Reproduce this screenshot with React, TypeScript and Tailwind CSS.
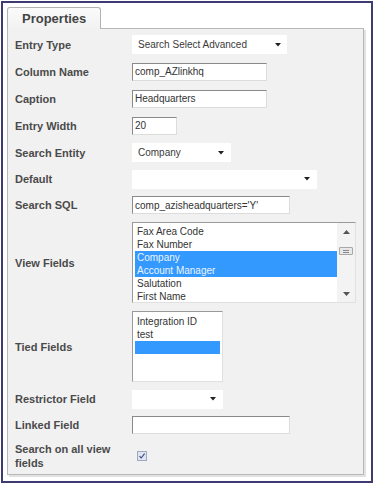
import type { ReactNode } from "react";

const font = { fontFamily: '"Liberation Sans", Arial, sans-serif' };

function Arrow() {
  return (
    <svg width="6" height="4" viewBox="0 0 6 4" className="shrink-0">
      <polygon points="0,0 6,0 3,3.5" fill="#222" />
    </svg>
  );
}

type RowProps = {
  label: ReactNode;
  className: string;
  children?: ReactNode;
};

function Row({ label, className, children }: RowProps) {
  return (
    <div className={`flex items-center ${className}`}>
      <div className="w-[110px] shrink-0 text-[11px] font-bold leading-[14px] text-[#4a4a4a]">
        {label}
      </div>
      <div className="ml-[7px] flex items-center">{children}</div>
    </div>
  );
}

function Select({ value, className }: { value?: string; className: string }) {
  return (
    <div
      className={`flex h-[19px] items-center justify-between bg-white pl-[6px] text-[10px] text-[#3a3a3a] ${className}`}
    >
      <span>{value}</span>
      <Arrow />
    </div>
  );
}

function Input({ value, className }: { value?: string; className: string }) {
  return (
    <div
      className={`flex h-[18px] items-center border border-t-[#8a8a8a] border-l-[#8a8a8a] border-r-[#dcdcdc] border-b-[#dcdcdc] bg-white pl-[2px] text-[10px] text-[#333] ${className}`}
    >
      {value}
    </div>
  );
}

function ListItem({ text, selected }: { text?: string; selected?: boolean }) {
  return (
    <div
      className={`h-[13px] pl-[2px] text-[10px] leading-[13px] ${
        selected ? "bg-[#3399ff] text-[#eaf4ff]" : "text-[#333]"
      }`}
    >
      {text}
    </div>
  );
}

export default function App() {
  return (
    <div className="h-[484px] w-[375px] bg-white" style={font}>
      <div className="ml-px mt-px h-[482px] w-[372px] border-2 border-[#3d3b70] pl-1 pt-1">
        <div className="relative z-10 -mb-px flex h-[22px] w-[94px] items-center rounded-t-[3px] border border-b-0 border-[#b2b2b2] bg-gradient-to-b from-[#fbfbfb] to-[#f1f1f1] pl-[14px] text-[13px] font-bold text-[#454545]">
          Properties
        </div>
        <div className="h-[447px] w-[357px] border border-[#b8b8b8] bg-[#f1f1f1] pl-[7px] pt-[2px] shadow-[2px_2px_0_0_#e2e2e2]">
          <Row label="Entry Type" className="h-[27px]">
            <Select value="Search Select Advanced" className="w-[155px] pr-[6px]" />
          </Row>
          <Row label="Column Name" className="h-[27px]">
            <Input value="comp_AZlinkhq" className="w-[135px]" />
          </Row>
          <Row label="Caption" className="h-[27px]">
            <Input value="Headquarters" className="w-[135px]" />
          </Row>
          <Row label="Entry Width" className="h-[27px]">
            <Input value="20" className="w-[45px]" />
          </Row>
          <Row label="Search Entity" className="h-[27px]">
            <Select value="Company" className="w-[99px] pr-[7px]" />
          </Row>
          <Row label="Default" className="h-[26px]">
            <Select className="w-[185px] pr-[7px]" />
          </Row>
          <Row label="Search SQL" className="h-[26px]">
            <Input value="comp_azisheadquarters='Y'" className="w-[158px]" />
          </Row>
          <Row label="View Fields" className="h-[89px]">
            <div className="flex h-[81px] w-[224px] border border-t-[#9a9a9a] border-l-[#9a9a9a] border-r-[#e0e0e0] border-b-[#e0e0e0] bg-white">
              <div className="flex-1 pl-[2px] pt-[2px]">
                <ListItem text="Fax Area Code" />
                <ListItem text="Fax Number" />
                <ListItem text="Company" selected />
                <ListItem text="Account Manager" selected />
                <ListItem text="Salutation" />
                <ListItem text="First Name" />
              </div>
              <div className="flex w-[18px] flex-col items-center bg-[#f3f3f3]">
                <svg width="7" height="4" viewBox="0 0 7 4" className="mt-[7px]">
                  <polygon points="0,4 7,4 3.5,0" fill="#555" />
                </svg>
                <div className="mt-[13px] flex h-[8px] w-[14px] flex-col justify-center gap-px rounded-[1px] border border-[#a8a8a8] bg-[#e8e8e8] px-[3px]">
                  <div className="h-px bg-[#888]" />
                  <div className="h-px bg-[#888]" />
                </div>
                <div className="flex-1" />
                <svg width="7" height="4" viewBox="0 0 7 4" className="mb-[6px]">
                  <polygon points="0,0 7,0 3.5,4" fill="#555" />
                </svg>
              </div>
            </div>
          </Row>
          <Row label="Tied Fields" className="h-[79px]">
            <div className="h-[71px] w-[91px] border border-t-[#9a9a9a] border-l-[#9a9a9a] border-r-[#e0e0e0] border-b-[#e0e0e0] bg-white pl-[2px] pr-[2px] pt-[3px]">
              <ListItem text="Integration ID" />
              <ListItem text="test" />
              <ListItem selected />
            </div>
          </Row>
          <Row label="Restrictor Field" className="h-[26px]">
            <Select className="w-[91px] pr-[7px]" />
          </Row>
          <Row label="Linked Field" className="h-[26px]">
            <Input className="w-[158px]" />
          </Row>
          <Row label="Search on all view fields" className="h-[36px]">
            <div className="ml-[5px] flex h-[10px] w-[10px] items-center justify-center border border-[#9fa8c0] bg-[#dfe4f2]">
              <svg width="8" height="8" viewBox="0 0 8 8">
                <path d="M1.5 4.2 L3.2 6 L6.6 1.6" fill="none" stroke="#3a4a7a" strokeWidth="1.1" />
              </svg>
            </div>
          </Row>
        </div>
      </div>
    </div>
  );
}
